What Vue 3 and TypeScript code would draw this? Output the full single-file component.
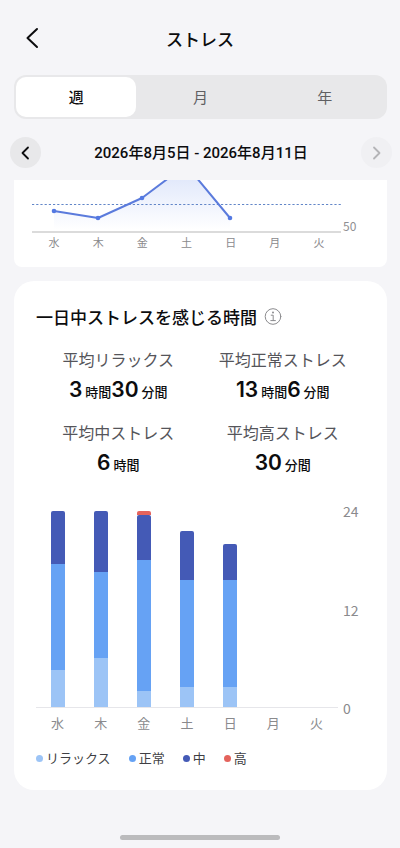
<script setup lang="ts">
import { computed, ref } from 'vue'

interface Part { value: number; unit: string }
interface Stat { label: string; parts: Part[] }
interface DayStress { day: string; relax: number; normal: number; medium: number; high: number }

const periods: string[] = ['週', '月', '年']
const activePeriod = ref<string>('週')

const stats: Stat[] = [
  { label: '平均リラックス', parts: [{ value: 3, unit: '時間' }, { value: 30, unit: '分間' }] },
  { label: '平均正常ストレス', parts: [{ value: 13, unit: '時間' }, { value: 6, unit: '分間' }] },
  { label: '平均中ストレス', parts: [{ value: 6, unit: '時間' }] },
  { label: '平均高ストレス', parts: [{ value: 30, unit: '分間' }] },
]

const week: DayStress[] = [
  { day: '水', relax: 4.5, normal: 13, medium: 6.5, high: 0 },
  { day: '木', relax: 6, normal: 10.5, medium: 7.5, high: 0 },
  { day: '金', relax: 2, normal: 16, medium: 5.5, high: 0.5 },
  { day: '土', relax: 2.5, normal: 13, medium: 6, high: 0 },
  { day: '日', relax: 2.5, normal: 13, medium: 4.5, high: 0 },
  { day: '月', relax: 0, normal: 0, medium: 0, high: 0 },
  { day: '火', relax: 0, normal: 0, medium: 0, high: 0 },
]

const levels = ['high', 'medium', 'normal', 'relax'] as const

const legend = [
  { key: 'relax', label: 'リラックス' },
  { key: 'normal', label: '正常' },
  { key: 'medium', label: '中' },
  { key: 'high', label: '高' },
]

const points = [
  { x: 22, y: 31 },
  { x: 66, y: 38 },
  { x: 110, y: 18 },
  { x: 154, y: -15 },
  { x: 198, y: 38 },
]
const line = computed(() => points.map((p) => `${p.x},${p.y}`).join(' '))
const area = computed(() => `22,52 ${line.value} 198,52`)

const share = (hours: number): string => `${(hours / 24) * 100}%`
</script>

<template>
  <div class="screen">
    <header class="topbar">
      <button class="back" type="button" aria-label="戻る">
        <svg width="14" height="22" viewBox="0 0 14 22"><path d="M12 2 2.5 11 12 20" /></svg>
      </button>
      <h1>ストレス</h1>
    </header>

    <nav class="segments">
      <button
        v-for="period in periods"
        :key="period"
        type="button"
        :class="{ active: period === activePeriod }"
        :aria-pressed="period === activePeriod"
        @click="activePeriod = period"
      >{{ period }}</button>
    </nav>

    <div class="range">
      <button class="step" type="button" aria-label="前の週">
        <svg width="9" height="14" viewBox="0 0 9 14"><path d="M7 1.5 1.5 7 7 12.5" /></svg>
      </button>
      <p>2026年8月5日 - 2026年8月11日</p>
      <button class="step next" type="button" aria-label="次の週" disabled>
        <svg width="9" height="14" viewBox="0 0 9 14"><path d="M2 1.5 7.5 7 2 12.5" /></svg>
      </button>
    </div>

    <main>
      <section class="card trend">
        <div class="trend-plot">
          <svg viewBox="0 0 309 53">
            <defs>
              <linearGradient id="trend-fill" gradientUnits="userSpaceOnUse" x1="0" y1="-15" x2="0" y2="50">
                <stop offset="0" stop-color="#dae3fa" />
                <stop offset="1" stop-color="#ffffff" />
              </linearGradient>
            </defs>
            <polygon :points="area" fill="url(#trend-fill)" />
            <line class="mean" x1="0" y1="24.5" x2="309" y2="24.5" />
            <line class="base" x1="0" y1="52" x2="309" y2="52" />
            <polyline :points="line" />
            <circle v-for="p in points" :key="p.x" :cx="p.x" :cy="p.y" r="2.3" />
          </svg>
          <span>50</span>
        </div>
        <div class="days small">
          <span v-for="d in week" :key="d.day">{{ d.day }}</span>
        </div>
      </section>

      <section class="card daily">
        <div class="heading">
          <h2>一日中ストレスを感じる時間</h2>
          <button class="info" type="button" aria-label="説明">
            <svg width="18" height="18" viewBox="0 0 18 18">
              <circle cx="9" cy="8.5" r="7.8" />
              <path d="M7.2 7.2H9.2V12.4M6.8 12.6H11.4" />
              <circle class="dot" cx="9" cy="4.6" r="1" />
            </svg>
          </button>
        </div>

        <dl class="stats">
          <div v-for="stat in stats" :key="stat.label">
            <dt>{{ stat.label }}</dt>
            <dd>
              <span v-for="part in stat.parts" :key="part.unit" class="part"><b>{{ part.value }}</b><small>{{ part.unit }}</small></span>
            </dd>
          </div>
        </dl>

        <div class="chart">
          <div class="bars">
            <div v-for="d in week" :key="d.day" class="bar">
              <i v-for="level in levels" :key="level" :class="level" :style="{ height: share(d[level]) }"></i>
            </div>
          </div>
          <div class="scale"><span>24</span><span>12</span><span>0</span></div>
          <div class="days">
            <span v-for="d in week" :key="d.day">{{ d.day }}</span>
          </div>
        </div>

        <ul class="legend">
          <li v-for="item in legend" :key="item.key"><i :class="item.key"></i>{{ item.label }}</li>
        </ul>
      </section>
    </main>

    <div class="home"></div>
  </div>
</template>

<style>
body {
  background: #f5f5f8;
}
</style>

<style scoped>
.screen {
  display: flex;
  flex-direction: column;
  box-sizing: border-box;
  min-height: 100vh;
  padding-bottom: 8px;
  background: #f5f5f8;
  color: #0c0c0e;
  font-family: "Noto Sans CJK JP", sans-serif;
}

h1, h2, p, dl, dd, ul {
  margin: 0;
  padding: 0;
}

button {
  padding: 0;
  border: 0;
  background: none;
  color: inherit;
  font: inherit;
}

svg {
  display: block;
  fill: none;
  stroke: currentColor;
  stroke-linecap: round;
  stroke-linejoin: round;
}

.topbar {
  display: grid;
  grid-template-columns: 32px 1fr 32px;
  align-items: center;
  height: 75px;
  padding: 0 16px;
  box-sizing: border-box;
}

.back {
  display: flex;
  justify-content: center;
}

.back svg {
  stroke-width: 2;
}

h1 {
  padding-top: 2px;
  font-size: 17px;
  font-weight: 500;
  line-height: 24px;
  text-align: center;
}

.segments {
  display: grid;
  grid-template-columns: repeat(3, 1fr);
  gap: 4px;
  height: 44px;
  margin: 0 13px 0 14px;
  padding: 2px;
  box-sizing: border-box;
  border-radius: 12px;
  background: #e8e8ea;
}

.segments button {
  border-radius: 10px;
  color: #5f5f62;
  font-size: 15px;
  line-height: 20px;
}

.segments .active {
  background: #fff;
  color: #0c0c0e;
  font-weight: 500;
}

.range {
  display: flex;
  align-items: center;
  justify-content: space-between;
  height: 61px;
  padding: 6px 8px 0 10px;
  box-sizing: border-box;
}

.range p {
  font-family: Roboto, "Noto Sans CJK JP", sans-serif;
  font-size: 15px;
  font-weight: 500;
  line-height: 20px;
}

.step {
  display: flex;
  align-items: center;
  justify-content: center;
  width: 31px;
  height: 31px;
  border-radius: 50%;
  background: #e8e8ea;
}

.step svg {
  stroke-width: 1.8;
}

.step.next {
  background: #f0f0f3;
  color: #b4b4b7;
}

main {
  display: flex;
  flex-direction: column;
  gap: 14px;
  margin: 0 13px 0 14px;
}

.card {
  background: #fff;
}

.trend {
  padding: 0 18px 16px;
  border-radius: 0 0 8px 8px;
}

.trend-plot {
  display: flex;
  align-items: flex-end;
  gap: 2px;
}

.trend-plot svg {
  flex: 1;
  min-width: 0;
  overflow: hidden;
  stroke: none;
}

.trend-plot polyline {
  stroke: #5b7bdc;
  stroke-width: 2;
}

.trend-plot circle {
  fill: #5479e2;
}

.trend-plot .mean {
  stroke: #6286c8;
  stroke-width: 1.2;
  stroke-dasharray: 2.2 2;
  stroke-linecap: butt;
}

.trend-plot .base {
  stroke: #cfcfcf;
  stroke-width: 1.3;
}

.trend-plot span {
  width: 26px;
  color: #8f8f92;
  font-size: 12px;
  line-height: 14px;
}

.days {
  display: grid;
  grid-template-columns: repeat(7, 1fr);
  color: #8a8a8d;
  font-size: 13px;
  line-height: 20px;
  text-align: center;
}

.days.small {
  margin-right: 28px;
  font-size: 11px;
  line-height: 18px;
}

.daily {
  padding: 24px 22px 22px;
  border-radius: 20px;
}

.heading {
  display: flex;
  align-items: center;
  gap: 7px;
}

h2 {
  font-size: 17px;
  font-weight: 500;
  line-height: 24px;
}

.info {
  color: #8b8b8e;
}

.info .dot {
  fill: currentColor;
  stroke: none;
}

.stats {
  display: grid;
  grid-template-columns: 1fr 1fr;
  row-gap: 13px;
  margin-top: 18px;
  text-align: center;
}

.stats dt {
  color: #55555a;
  font-size: 16px;
  line-height: 24px;
}

.stats dd {
  display: flex;
  align-items: center;
  justify-content: center;
  height: 32px;
  margin-top: 4px;
}

.part {
  display: flex;
  align-items: baseline;
  gap: 3px;
  line-height: 32px;
}

.part b {
  font-family: Inter, "Noto Sans CJK JP", sans-serif;
  font-size: 21px;
  font-weight: 600;
}

.part small {
  font-size: 13px;
  font-weight: 500;
}

.chart {
  display: grid;
  grid-template-columns: 1fr 22px;
  column-gap: 5px;
  row-gap: 5px;
  margin-top: 31px;
}

.bars {
  display: grid;
  grid-template-columns: repeat(7, 1fr);
  justify-items: center;
  height: 196px;
  border-bottom: 1px solid #e6e6ea;
}

.bar {
  display: flex;
  flex-direction: column;
  justify-content: flex-end;
  width: 14px;
  height: 100%;
}

.bar i {
  flex: none;
}

.bar .high {
  border-radius: 2px 2px 0 0;
}

.bar .medium {
  border-radius: 2px 2px 0 0;
}

.relax {
  background: #9cc4f6;
}

.normal {
  background: #66a2f4;
}

.medium {
  background: #445ab6;
}

.high {
  background: #e4635c;
}

.scale {
  display: flex;
  flex-direction: column;
  justify-content: space-between;
  margin: -10px 0;
  color: #8a8a8d;
  font-size: 14px;
  line-height: 20px;
}

.legend {
  display: flex;
  gap: 18px;
  margin-top: 15px;
  color: #3f3f44;
  font-size: 13px;
  line-height: 20px;
  list-style: none;
}

.legend li {
  display: flex;
  align-items: center;
  gap: 3px;
}

.legend i {
  width: 7px;
  height: 7px;
  border-radius: 50%;
}

.home {
  width: 40%;
  height: 5px;
  margin: auto auto 0;
  border-radius: 3px;
  background: #bbbbbd;
}
</style>
